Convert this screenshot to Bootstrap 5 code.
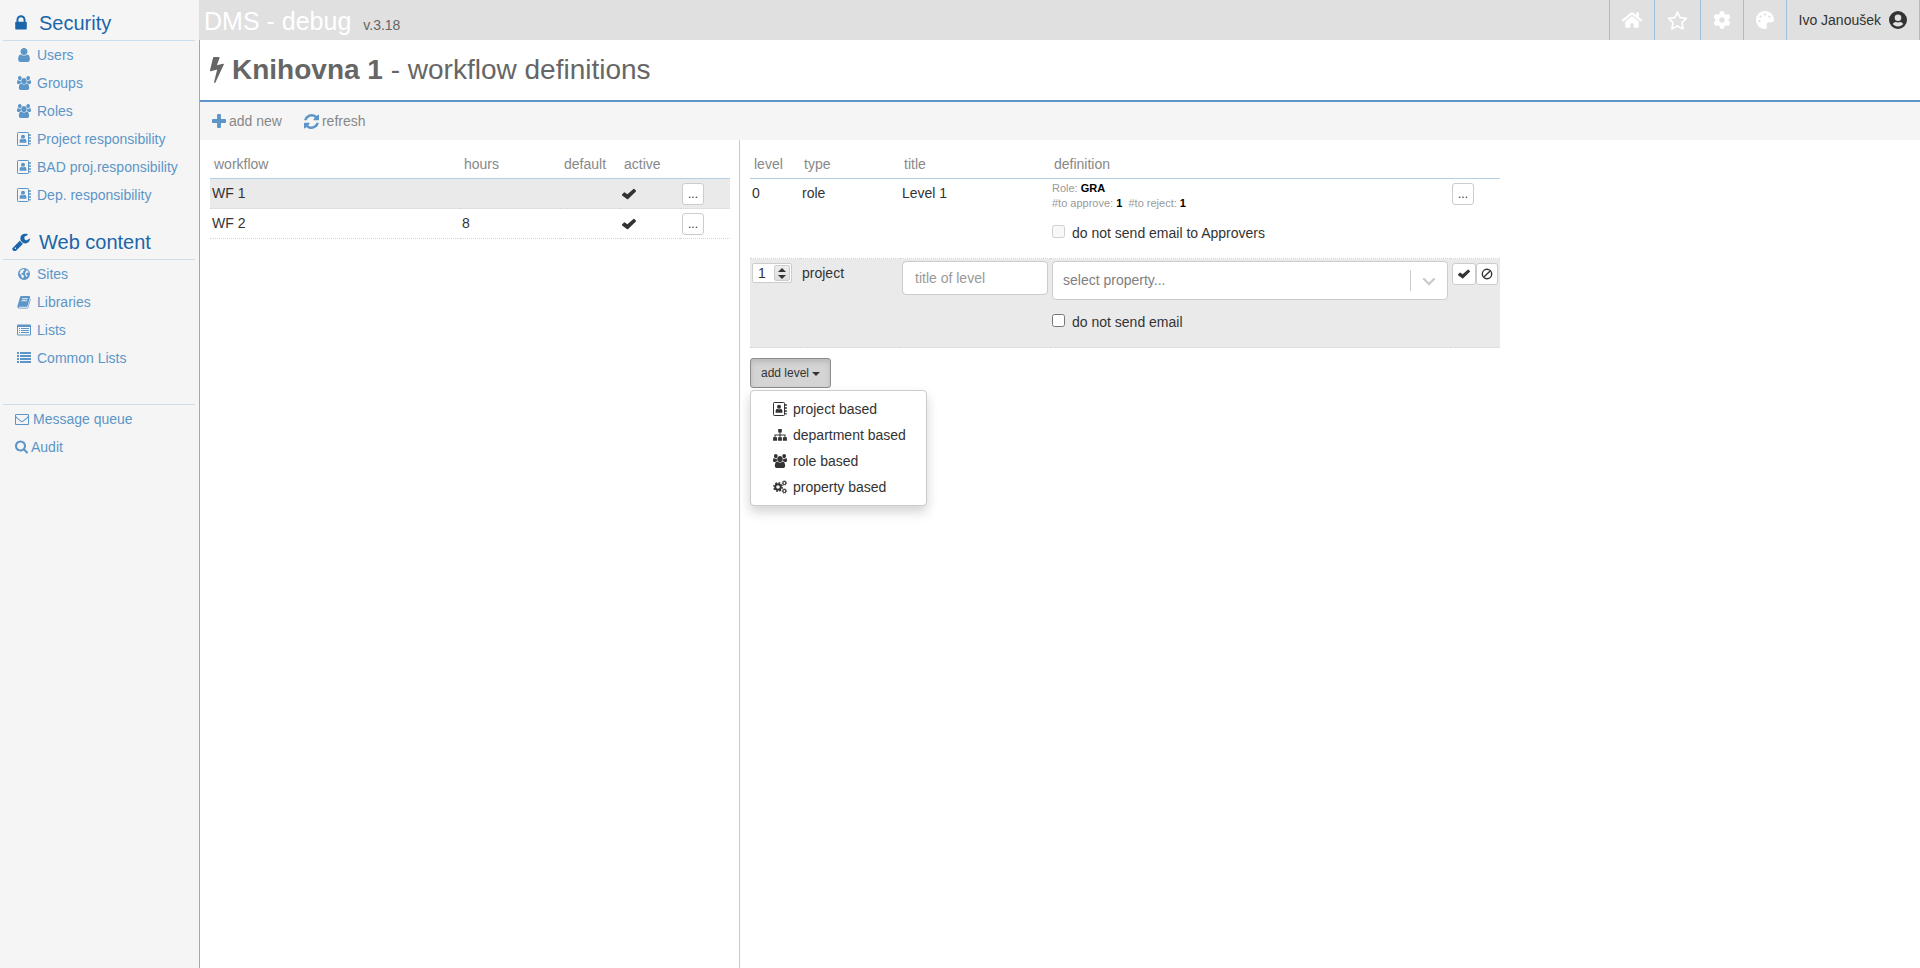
<!DOCTYPE html>
<html lang="en">
<head>
<meta charset="utf-8">
<meta name="viewport" content="width=device-width, initial-scale=1">
<title>DMS - workflow definitions</title>
<link href="https://cdn.jsdelivr.net/npm/bootstrap@5.3.0/dist/css/bootstrap.min.css" rel="stylesheet">
<style>
  body { font-family: "Liberation Sans", Arial, sans-serif; font-size: 14px; line-height: 20px; color: #333; }
  a { text-decoration: none; }
  .ico { width: 14px; height: 14px; fill: currentColor; flex: none; }

  /* sidebar */
  .side { width: 199px; background: #f5f5f5; padding: 4px 4px 0 3px; }
  .side h2 { height: 37px; font-size: 20px; font-weight: 400; line-height: 24px; color: #1b65aa; border-bottom: 1px solid #c9dff0; padding-left: 9px; padding-top: 2px; gap: 9px; }
  .side h2 .ico { width: 18px; height: 18px; }
  .side h2 + ul { margin-bottom: 14px; }
  .side li a { height: 28px; color: #5c95c8; padding-left: 14px; gap: 6px; }
  .side .extra { margin-top: 32px; border-top: 1px solid #c9dff0; }
  .side .extra a { padding-left: 12px; gap: 4px; }
  .side .extra .ico-search { width: 13px; }
  .side .extra a:has(.ico-search) { gap: 3px; }

  /* top bar */
  .topbar { height: 40px; background: #e0e0e0; padding-left: 5px; }
  .brand { font-size: 25px; line-height: 30px; color: #fff; padding-top: 2px; }
  .version { font-size: 14px; color: #666; margin: 9px 0 0 12px; }
  .topbar .tool { border-left: 1px solid #9cc0de; padding: 0 12px; color: #fff; }
  .topbar .user { color: #333; border-right: 1px solid #9cc0de; gap: 8px; }
  .topbar .ico { width: 18px; height: 18px; }
  .topbar .ico.wide { width: 20px; }
  .topbar .ico.wider { width: 21px; height: 19px; }

  /* main area */
  .work { border-left: 1px solid #82b0d8; }
  .title-bar { height: 62px; border-bottom: 2px solid #5c95c8; padding-left: 10px; }
  .title-bar h1 { font-size: 28px; line-height: 34px; font-weight: 400; color: #666; }
  .title-bar .ico { width: 14px; height: 26px; margin-right: 8px; }
  .actions { height: 38px; background: #f5f5f5; padding-left: 12px; gap: 22px; }
  .actions button { font-size: 14px; color: #888; gap: 3px; }
  .actions .ico { color: #5c95c8; }
  .actions .ico-refresh { width: 15px; height: 15px; }

  .pane-left { width: 540px; padding: 0 9px 0 10px; border-right: 1px solid #b3cfe7; }
  .pane-right { padding: 0 10px; }
  .grid-table { table-layout: fixed; width: 100%; border-collapse: separate; border-spacing: 0; }
  .grid-table th { height: 39px; padding: 10px 4px 0; font-weight: 400; color: #888; border-bottom: 1px solid #b3cfe7; }
  .grid-table td { padding: 4px 2px 3px; vertical-align: top; border-bottom: 1px dotted #c3daee; }
  .grid-table tr.sel td { background: #eaeaea; }
  .levels { max-width: 750px; }
  .btn-cell { width: 22px; height: 22px; font-size: 12px; line-height: 18px; padding: 0; background: #fff; border: 1px solid #ccc; border-radius: 3px; color: #333; }
  .btn-cell .ico { width: 12px; height: 12px; display: block; margin: 0 auto; }
  .btn-cell.save { width: 24px; }

  .info { font-size: 11px; line-height: 15px; color: #999; }
  .info b { color: #000; }
  .opt { gap: 7px; line-height: 20px; margin-top: 12px; }
  .opt input { width: 13px; height: 13px; margin: 0 0 3px; }
  .levels td.ctl { padding-top: 2px; }
  .levels td.roomy { padding-bottom: 15px; }

  .stepper { width: 40px; height: 20px; background: #fff; border: 1px solid #ccc; border-radius: 2px; padding: 1px; }
  .stepper input { width: 20px; border: 0; padding: 0 0 0 4px; color: #333; background: none; line-height: 16px; appearance: textfield; -moz-appearance: textfield; }
  .stepper input::-webkit-inner-spin-button { appearance: none; -webkit-appearance: none; }
  .spin { width: 16px; height: 16px; border: 1px solid #ccc; border-radius: 2px; background: linear-gradient(#eee, #ddd); }
  .spin button { height: 7px; width: 14px; }
  .spin svg { width: 8px; height: 4px; display: block; margin: auto; fill: #333; }

  .field { height: 34px; font-size: 14px; border: 1px solid #ccc; border-radius: 4px; padding: 6px 12px; }
  .field::placeholder { color: #999; }
  .picker { height: 39px; font-size: 14px; color: #808080; border: 1px solid #ccc; border-radius: 4px; padding: 6px 50px 6px 10px;
    background: #fff url("data:image/svg+xml,%3Csvg xmlns='http://www.w3.org/2000/svg' width='37' height='22'%3E%3Cpath d='M.5 0v21' stroke='%23ccc'/%3E%3Cpath d='M14 9l5 5 5-5' fill='none' stroke='%23ccc' stroke-width='2.4' stroke-linecap='round'/%3E%3C/svg%3E") no-repeat right 0 center; background-size: 37px 22px; }

  .level-picker { margin-top: 10px; }
  .btn-level { height: 30px; width: 81px; font-size: 12px; line-height: 18px; padding: 0; color: #333; background: #d4d4d4; border: 1px solid #8c8c8c; border-radius: 3px; box-shadow: inset 0 3px 5px rgba(0,0,0,.125); }
  .btn-level:hover, .btn-level.show { background: #d4d4d4 !important; border-color: #8c8c8c !important; color: #333 !important; }
  .btn-level.dropdown-toggle::after { border-width: 4px; border-bottom: 0; margin-left: 3px; vertical-align: 1px; }
  .level-menu { top: 100%; margin-top: 2px; width: 177px; padding: 5px 0; font-size: 14px; border: 1px solid #ccc; border-radius: 4px; box-shadow: 0 6px 12px rgba(0,0,0,.175); }
  .level-menu .dropdown-item { height: 26px; padding: 0 20px 0 22px; gap: 6px; color: #333; }
</style>
</head>
<body class="bg-white">

<svg class="d-none" xmlns="http://www.w3.org/2000/svg">
  <symbol id="i-lock" viewBox="0 0 1792 1792"><path d="M640 768h512v-192q0-106-75-181t-181-75-181 75-75 181v192zm832 96v576q0 40-28 68t-68 28h-960q-40 0-68-28t-28-68v-576q0-40 28-68t68-28h32v-192q0-184 132-316t316-132 316 132 132 316v192h32q40 0 68 28t28 68z"/></symbol>
  <symbol id="i-user" viewBox="128 128 1536 1536"><path d="M1536 1399q0 109-62.500 187t-150.500 78h-854q-88 0-150.500-78t-62.500-187q0-85 8.500-160.500t31.500-152 58.500-131 94-89 134.500-34.500q131 128 313 128t313-128q76 0 134.500 34.500t94 89 58.500 131 31.500 152 8.500 160.500zm-256-887q0 159-112.500 271.500t-271.500 112.500-271.500-112.500-112.500-271.500 112.500-271.500 271.500-112.500 271.500 112.500 112.500 271.500z"/></symbol>
  <symbol id="i-users" viewBox="0 0 1792 1664" preserveAspectRatio="none"><path d="M529 896q-162 5-265 128h-134q-82 0-138-40.500t-56-118.500q0-353 124-353 6 0 43.500 21t97.500 42.500 119 21.500q67 0 133-23-5 37-5 66 0 159 81 256zm1071 637q0 120-73 189.500t-194 69.500h-874q-121 0-194-69.500t-73-189.500q0-53 3.500-103.500t14-109 26.500-108.500 43-97.500 62-81 85.500-53.500 111.500-20q10 0 43 21.500t73 48 107 48 135 21.500 135-21.500 107-48 73-48 43-21.500q61 0 111.500 20t85.500 53.500 62 81 43 97.500 26.500 108.500 14 109 3.500 103.500zm-1024-1277q0 106-75 181t-181 75-181-75-75-181 75-181 181-75 181 75 75 181zm704 384q0 159-112.500 271.500t-271.500 112.500-271.500-112.500-112.500-271.500 112.500-271.500 271.500-112.500 271.500 112.500 112.500 271.500zm576 225q0 78-56 118.500t-138 40.500h-134q-103-123-265-128 90-97 90-256 0-29-5-66 66 23 133 23 59 0 119-21.500t97.500-42.500 43.500-21q124 0 124 353zm-128-609q0 106-75 181t-181 75-181-75-75-181 75-181 181-75 181 75 75 181z" transform="translate(60 0) scale(.93)"/></symbol>
  <symbol id="i-contact" viewBox="0 0 14 14"><rect x=".5" y=".5" width="11" height="13" rx=".8" fill="none" stroke="currentColor"/><circle cx="6" cy="4.700" r="2"/><path d="M2.600 10.800V9q0-2 1.700-2.300 1.700 1.200 3.400 0Q9.400 7 9.400 9v1.800z"/><path d="M12.200 2h1.500v2h-1.500zM12.200 5h1.500v2h-1.500zM12.200 8h1.500v2h-1.500zM12.200 11h1.500v1.500h-1.500z"/></symbol>
  <symbol id="i-wrench" viewBox="64 64 1664 1664"><path d="M448 1472q0-26-19-45t-45-19-45 19-19 45 19 45 45 19 45-19 19-45zm644-420l-682 682q-37 37-90 37-52 0-91-37l-106-108q-38-36-38-90 0-53 38-91l681-681q39 98 114.500 173.500t173.500 114.500zm634-435q0 39-23 106-47 134-164.500 217.500t-258.500 83.500q-185 0-316.500-131.500t-131.500-316.500 131.500-316.500 316.500-131.500q58 0 121.500 16.500t107.500 46.500q16 11 16 28t-16 28l-293 169v224l193 107q5-3 79-48.500t135.500-81 70.500-35.500q15 0 23.500 10t8.500 25z"/></symbol>
  <symbol id="i-globe" viewBox="0 0 14 14"><path fill-rule="evenodd" d="M7 1a6 6 0 1 0 0 12A6 6 0 0 0 7 1zM3.600 3.200l2.700-1.100 1.500 1-1.700 1.400.3 1-1.600.6-.6 1.200 2.200.7.600 1.400-1.200 2-1.300-1.400-.3-2-1.700-1.400zM9.400 2.600l1.600 1.300.8 2-1.400-.3-1.300 1 .4 1.500 1.300.2-1.200 1.800-1-1.200-.6-2.400.4-1.600 1.200-1z"/></symbol>
  <symbol id="i-book" viewBox="0 0 14 14"><path fill-rule="evenodd" d="M4.300 1h8q1.100.2.800 1.300l-2.500 8.500q-.3.900-1.200.9H2.200q-.7 0-.6.500.2.500.9.500h7.600q.5 0 .7-.6l2.500-8.400q.6.300.4 1.100l-2.400 7.800q-.3.900-1.200.9H2Q.2 13.200.3 11.400L3 2.200Q3.400 1 4.300 1zM5.200 3.200L5 4.200h5.600l.3-1zM4.600 5.300l-.3 1h5.600l.3-1z"/></symbol>
  <symbol id="i-listalt" viewBox="0 0 14 14"><path fill-rule="evenodd" d="M1.200 1.500h11.600Q14 1.500 14 2.700v8.600q0 1.200-1.200 1.200H1.200Q0 12.500 0 11.300V2.700q0-1.200 1.200-1.200zM1 4v7.500h12V4z"/><path d="M2 5h1v1H2zM4 5h8v1H4zM2 7h1v1H2zM4 7h8v1H4zM2 9h1v1H2zM4 9h8v1H4z"/></symbol>
  <symbol id="i-list" viewBox="0 0 14 14"><path d="M0 1h2v2H0zM3 1h11v2H3zM0 4h2v2H0zM3 4h11v2H3zM0 7h2v2H0zM3 7h11v2H3zM0 10h2v2H0zM3 10h11v2H3z"/></symbol>
  <symbol id="i-mail" viewBox="0 0 1792 1792"><path d="M1664 1504v-768q-32 36-69 66-268 206-426 338-51 43-83 67t-86.500 48.500-102.500 24.500h-2q-48 0-102.500-24.500t-86.500-48.500-83-67q-158-132-426-338-37-30-69-66v768q0 13 9.500 22.500t22.500 9.500h1472q13 0 22.500-9.500t9.500-22.500zm0-1051v-24.500l-.5-13-3-12.500-5.500-9-9-7.500-14-2.500h-1472q-13 0-22.500 9.500t-9.500 22.500q0 168 147 284 193 152 401 317 6 5 35 29.500t46 37.500 44.500 31.500 50.500 27.500 43 9h2q20 0 43-9t50.500-27.500 44.500-31.500 46-37.500 35-29.500q208-165 401-317 54-43 100.500-115.500t46.500-131.500zm128-37v1088q0 66-47 113t-113 47h-1472q-66 0-113-47t-47-113v-1088q0-66 47-113t113-47h1472q66 0 113 47t47 113z"/></symbol>
  <symbol id="i-search" viewBox="64 128 1664 1664"><path d="M1216 832q0-185-131.500-316.500t-316.500-131.500-316.500 131.500-131.500 316.500 131.500 316.500 316.500 131.500 316.500-131.500 131.500-316.500zm512 832q0 52-38 90t-90 38q-54 0-90-38l-343-342q-179 124-399 124-143 0-273.500-55.500t-225-150-150-225-55.500-273.500 55.500-273.500 150-225 225-150 273.500-55.500 273.500 55.500 225 150 150 225 55.500 273.500q0 220-124 399l343 343q37 37 37 90z"/></symbol>
  <symbol id="i-home" viewBox="0 0 576 512"><path d="M280.370 148.260L96 300.110V464a16 16 0 0 0 16 16l112.060-.29a16 16 0 0 0 15.920-16V368a16 16 0 0 1 16-16h64a16 16 0 0 1 16 16v95.640a16 16 0 0 0 16 16.050L464 480a16 16 0 0 0 16-16V300L295.670 148.260a12.190 12.190 0 0 0-15.300 0zM571.600 251.470L488 182.560V44.050a12 12 0 0 0-12-12h-56a12 12 0 0 0-12 12v72.610L318.470 43a48 48 0 0 0-61 0L4.340 251.470a12 12 0 0 0-1.600 16.900l25.500 31A12 12 0 0 0 45.150 301l235.220-193.740a12.190 12.190 0 0 1 15.300 0L530.900 301a12 12 0 0 0 16.900-1.600l25.500-31a12 12 0 0 0-1.700-16.930z"/></symbol>
  <symbol id="i-star" viewBox="0 0 20 18"><path d="M10 1l2.600 5.200 5.900.8-4.200 4.100 1 5.900-5.300-2.800-5.300 2.800 1-5.900L1.500 7l5.900-.8z" fill="none" stroke="currentColor" stroke-width="1.600" stroke-linejoin="round"/></symbol>
  <symbol id="i-cog" viewBox="0 0 512 512"><path d="M487.400 315.700l-42.600-24.600c4.300-23.200 4.300-47 0-70.200l42.600-24.600c4.900-2.800 7.100-8.600 5.500-14-11.100-35.600-30-67.800-54.700-94.600-3.800-4.100-10-5.100-14.800-2.300L380.800 110c-17.900-15.400-38.500-27.300-60.800-35.100V25.800c0-5.600-3.900-10.500-9.400-11.700-36.700-8.200-74.300-7.800-109.200 0-5.500 1.200-9.400 6.100-9.400 11.700V75c-22.200 7.900-42.800 19.800-60.800 35.100L88.700 85.500c-4.900-2.800-11-1.900-14.800 2.300-24.700 26.700-43.600 58.900-54.700 94.600-1.700 5.400.6 11.200 5.500 14L67.300 221c-4.300 23.200-4.300 47 0 70.200l-42.600 24.600c-4.900 2.800-7.100 8.600-5.500 14 11.100 35.600 30 67.800 54.700 94.600 3.800 4.100 10 5.100 14.800 2.300l42.600-24.600c17.900 15.400 38.500 27.300 60.800 35.100v49.200c0 5.600 3.900 10.500 9.400 11.700 36.700 8.200 74.300 7.800 109.200 0 5.500-1.200 9.400-6.100 9.400-11.700v-49.200c22.200-7.900 42.800-19.800 60.800-35.100l42.600 24.600c4.900 2.800 11 1.900 14.800-2.300 24.700-26.700 43.600-58.900 54.700-94.600 1.500-5.500-.7-11.300-5.600-14.100zM256 336c-44.100 0-80-35.900-80-80s35.900-80 80-80 80 35.900 80 80-35.900 80-80 80z"/></symbol>
  <symbol id="i-palette" viewBox="0 0 512 512"><path d="M204.300 5C104.900 24.400 24.800 104.300 5.200 203.400c-37 187 131.700 326.400 258.800 306.700 41.200-6.400 61.400-54.600 42.500-91.700-23.100-45.400 9.900-98.400 60.900-98.400h79.700c35.800 0 64.800-29.600 64.900-65.300C511.500 97.100 368.100-26.900 204.300 5zM96 320c-17.700 0-32-14.300-32-32s14.300-32 32-32 32 14.300 32 32-14.300 32-32 32zm32-128c-17.700 0-32-14.300-32-32s14.300-32 32-32 32 14.300 32 32-14.300 32-32 32zm128-64c-17.700 0-32-14.300-32-32s14.300-32 32-32 32 14.300 32 32-14.300 32-32 32zm128 64c-17.700 0-32-14.300-32-32s14.300-32 32-32 32 14.300 32 32-14.300 32-32 32z"/></symbol>
  <symbol id="i-account" viewBox="0 0 18 18"><path fill-rule="evenodd" d="M9 0a9 9 0 1 0 0 18A9 9 0 0 0 9 0zm0 3.400a3.300 3.300 0 1 1 0 6.600 3.300 3.300 0 0 1 0-6.600zM9 15.600c-2.300 0-4-1-5.200-2.500C4.500 11.800 5.600 11 6.800 11q2.200.9 4.400 0c1.200 0 2.300.8 3 2.100C13 14.600 11.300 15.600 9 15.600z"/></symbol>
  <symbol id="i-bolt" viewBox="450 120 900 1680" preserveAspectRatio="none"><path d="M1333 566q18 20 7 44l-540 1157q-13 25-42 25-4 0-14-2-17-5-25.500-19t-4.500-30l197-808-406 101q-4 1-12 1-18 0-31-11-18-15-13-39l201-825q4-14 16-23t28-9h328q19 0 32 12.500t13 29.500q0 8-5 18l-171 463 396-98q8-2 12-2 19 0 34 15z"/></symbol>
  <symbol id="i-plus" viewBox="192 128 1408 1408"><path d="M1600 736v192q0 40-28 68t-68 28h-416v416q0 40-28 68t-68 28h-192q-40 0-68-28t-28-68v-416h-416q-40 0-68-28t-28-68v-192q0-40 28-68t68-28h416v-416q0-40 28-68t68-28h192q40 0 68 28t28 68v416h416q40 0 68 28t28 68z"/></symbol>
  <symbol id="i-refresh" viewBox="128 128 1536 1536"><path d="M1639 1056q0 5-1 7-64 268-268 434.500t-478 166.500q-146 0-282.500-55t-243.500-157l-129 129q-19 19-45 19t-45-19-19-45v-448q0-26 19-45t45-19h448q26 0 45 19t19 45-19 45l-137 137q71 66 161 102t187 36q134 0 250-65t186-179q11-17 53-117 8-23 30-23h192q13 0 22.500 9.500t9.500 22.500zm25-800v448q0 26-19 45t-45 19h-448q-26 0-45-19t-19-45 19-45l138-138q-148-137-349-137-134 0-250 65t-186 179q-11 17-53 117-8 23-30 23h-199q-13 0-22.500-9.500t-9.500-22.500v-7q65-268 270-434.500t480-166.500q146 0 284 55.500t245 156.500l130-129q19-19 45-19t45 19 19 45z"/></symbol>
  <symbol id="i-check" viewBox="0 0 12 12"><path d="M0 6.500l1.700-1.800q.4-.3.800 0L4.600 6.200l5.200-4.500q.4-.3.800.1L11.900 3q.3.400 0 .8L5.300 10.300q-.6.500-1.100 0L.1 7.200q-.3-.4-.1-.7z"/></symbol>
  <symbol id="i-ban" viewBox="0 0 12 12"><circle cx="6" cy="6" r="4.700" fill="none" stroke="currentColor" stroke-width="1.400"/><path d="M2.900 9.100l6.200-6.200" stroke="currentColor" stroke-width="1.400"/></symbol>
  <symbol id="i-tree" viewBox="0 0 14 14"><path d="M5.200 1h3.600v3.600H7.500v2h5v2.600h1.400v3.600h-4V9.200h1.600V7.600h-4v1.600h1.400v3.600H5.100V9.200h1.400V7.600h-4v1.600h1.600v3.600h-4V9.200h1.400V6.600h5v-2H5.200z"/></symbol>
  <symbol id="i-cogs" viewBox="0 0 14 14"><g fill="none" stroke="currentColor"><circle cx="5" cy="7" r="2.800" stroke-width="2"/><circle cx="5" cy="7" r="4.200" stroke-width="1.500" stroke-dasharray="1.700 1.600"/><circle cx="11.400" cy="3" r="1.500" stroke-width="1.200"/><circle cx="11.400" cy="3" r="2.300" stroke-width=".8" stroke-dasharray=".9 .9"/><circle cx="11.400" cy="11" r="1.500" stroke-width="1.200"/><circle cx="11.400" cy="11" r="2.300" stroke-width=".8" stroke-dasharray=".9 .9"/></g></symbol>
</svg>

<div class="d-flex min-vh-100">
  <nav class="side flex-shrink-0" aria-label="Administration">
    <h2 class="d-flex align-items-center mb-0"><svg class="ico"><use href="#i-lock"/></svg>Security</h2>
    <ul class="list-unstyled">
      <li><a class="d-flex align-items-center" href="#"><svg class="ico"><use href="#i-user"/></svg>Users</a></li>
      <li><a class="d-flex align-items-center" href="#"><svg class="ico"><use href="#i-users"/></svg>Groups</a></li>
      <li><a class="d-flex align-items-center" href="#"><svg class="ico"><use href="#i-users"/></svg>Roles</a></li>
      <li><a class="d-flex align-items-center" href="#"><svg class="ico"><use href="#i-contact"/></svg>Project responsibility</a></li>
      <li><a class="d-flex align-items-center" href="#"><svg class="ico"><use href="#i-contact"/></svg>BAD proj.responsibility</a></li>
      <li><a class="d-flex align-items-center" href="#"><svg class="ico"><use href="#i-contact"/></svg>Dep. responsibility</a></li>
    </ul>
    <h2 class="d-flex align-items-center mb-0"><svg class="ico"><use href="#i-wrench"/></svg>Web content</h2>
    <ul class="list-unstyled mb-0">
      <li><a class="d-flex align-items-center" href="#"><svg class="ico"><use href="#i-globe"/></svg>Sites</a></li>
      <li><a class="d-flex align-items-center" href="#"><svg class="ico"><use href="#i-book"/></svg>Libraries</a></li>
      <li><a class="d-flex align-items-center" href="#"><svg class="ico"><use href="#i-listalt"/></svg>Lists</a></li>
      <li><a class="d-flex align-items-center" href="#"><svg class="ico"><use href="#i-list"/></svg>Common Lists</a></li>
    </ul>
    <ul class="list-unstyled extra">
      <li><a class="d-flex align-items-center" href="#"><svg class="ico"><use href="#i-mail"/></svg>Message queue</a></li>
      <li><a class="d-flex align-items-center" href="#"><svg class="ico ico-search"><use href="#i-search"/></svg>Audit</a></li>
    </ul>
  </nav>

  <div class="d-flex flex-column flex-grow-1">
    <header class="topbar d-flex">
      <div class="d-flex align-items-center me-auto">
        <a class="brand" href="#">DMS - debug</a><span class="version">v.3.18</span>
      </div>
      <a class="tool d-flex align-items-center" href="#" aria-label="Home"><svg class="ico wide"><use href="#i-home"/></svg></a>
      <a class="tool d-flex align-items-center" href="#" aria-label="Favourites"><svg class="ico wider"><use href="#i-star"/></svg></a>
      <a class="tool d-flex align-items-center" href="#" aria-label="Settings"><svg class="ico"><use href="#i-cog"/></svg></a>
      <a class="tool d-flex align-items-center" href="#" aria-label="Theme"><svg class="ico"><use href="#i-palette"/></svg></a>
      <a class="tool user d-flex align-items-center" href="#">Ivo Janoušek <svg class="ico"><use href="#i-account"/></svg></a>
    </header>

    <main class="work d-flex flex-column flex-grow-1">
      <div class="title-bar d-flex align-items-center">
        <h1 class="d-flex align-items-center mb-0"><svg class="ico"><use href="#i-bolt"/></svg><span><b>Knihovna 1</b> - workflow definitions</span></h1>
      </div>
      <div class="actions d-flex align-items-center">
        <button type="button" class="btn btn-link border-0 p-0 d-flex align-items-center text-decoration-none"><svg class="ico"><use href="#i-plus"/></svg>add new</button>
        <button type="button" class="btn btn-link border-0 p-0 d-flex align-items-center text-decoration-none"><svg class="ico ico-refresh"><use href="#i-refresh"/></svg>refresh</button>
      </div>

      <div class="d-flex flex-grow-1">
        <section class="pane-left flex-shrink-0">
          <table class="grid-table">
            <colgroup><col style="width:250px"><col style="width:100px"><col style="width:60px"><col style="width:60px"><col></colgroup>
            <thead><tr><th>workflow</th><th>hours</th><th>default</th><th>active</th><th aria-label="menu"></th></tr></thead>
            <tbody>
              <tr class="sel"><td>WF 1</td><td></td><td></td><td><svg class="ico" role="img" aria-label="yes"><use href="#i-check"/></svg></td><td><button type="button" class="btn-cell d-block">...</button></td></tr>
              <tr><td>WF 2</td><td>8</td><td></td><td><svg class="ico" role="img" aria-label="yes"><use href="#i-check"/></svg></td><td><button type="button" class="btn-cell d-block">...</button></td></tr>
            </tbody>
          </table>
        </section>

        <section class="pane-right flex-grow-1">
          <table class="grid-table levels">
            <colgroup><col style="width:50px"><col style="width:100px"><col style="width:150px"><col><col style="width:50px"></colgroup>
            <thead><tr><th>level</th><th>type</th><th>title</th><th>definition</th><th aria-label="menu"></th></tr></thead>
            <tbody>
              <tr>
                <td>0</td><td>role</td><td>Level 1</td>
                <td class="ctl roomy">
                  <div class="info">Role: <b>GRA</b><br>#to approve: <b>1</b>&nbsp; #to reject: <b>1</b></div>
                  <div class="opt d-flex align-items-center"><input type="checkbox" id="mail0" disabled><label for="mail0">do not send email to Approvers</label></div>
                </td>
                <td><button type="button" class="btn-cell d-block">...</button></td>
              </tr>
              <tr class="sel">
                <td><div class="stepper d-flex align-items-center">
                  <input type="number" value="1" aria-label="level">
                  <span class="spin d-flex flex-column">
                    <button type="button" class="border-0 p-0 bg-transparent" aria-label="up"><svg viewBox="0 0 8 4"><path d="M0 4l4-4 4 4z"/></svg></button>
                    <button type="button" class="border-0 p-0 bg-transparent" aria-label="down"><svg viewBox="0 0 8 4"><path d="M0 0l4 4 4-4z"/></svg></button>
                  </span></div></td>
                <td>project</td>
                <td class="ctl"><input type="text" class="field form-control" placeholder="title of level" aria-label="title of level"></td>
                <td class="ctl roomy">
                  <select class="picker form-select" aria-label="property"><option>select property...</option></select>
                  <div class="opt d-flex align-items-center"><input type="checkbox" id="mail1"><label for="mail1">do not send email</label></div>
                </td>
                <td><div class="d-flex"><button type="button" class="btn-cell save" aria-label="save"><svg class="ico"><use href="#i-check"/></svg></button><button type="button" class="btn-cell" aria-label="cancel"><svg class="ico"><use href="#i-ban"/></svg></button></div></td>
              </tr>
            </tbody>
          </table>

          <div class="dropdown level-picker d-inline-block">
            <button type="button" class="btn btn-level dropdown-toggle show d-block" data-bs-toggle="dropdown" aria-expanded="true">add level</button>
            <ul class="dropdown-menu level-menu show">
              <li><a class="dropdown-item d-flex align-items-center" href="#"><svg class="ico"><use href="#i-contact"/></svg>project based</a></li>
              <li><a class="dropdown-item d-flex align-items-center" href="#"><svg class="ico"><use href="#i-tree"/></svg>department based</a></li>
              <li><a class="dropdown-item d-flex align-items-center" href="#"><svg class="ico"><use href="#i-users"/></svg>role based</a></li>
              <li><a class="dropdown-item d-flex align-items-center" href="#"><svg class="ico"><use href="#i-cogs"/></svg>property based</a></li>
            </ul>
          </div>
        </section>
      </div>
    </main>
  </div>
</div>

<script src="https://cdn.jsdelivr.net/npm/bootstrap@5.3.0/dist/js/bootstrap.bundle.min.js"></script>
</body>
</html>
